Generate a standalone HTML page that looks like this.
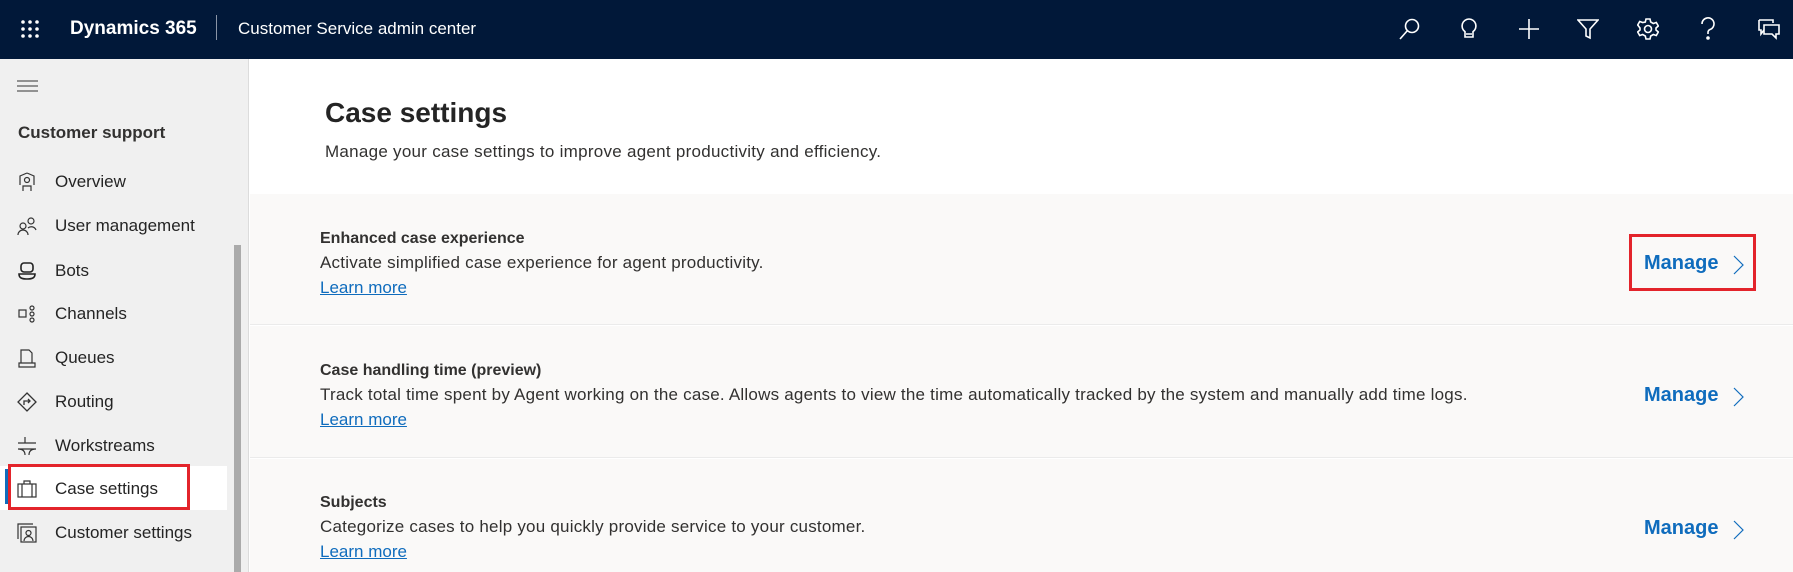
<!DOCTYPE html>
<html><head><meta charset="utf-8"><style>
*{margin:0;padding:0;box-sizing:border-box}
body{width:1793px;height:572px;overflow:hidden;font-family:"Segoe UI","Liberation Sans",sans-serif;background:#fff;position:relative;color:#242424}
.top{position:absolute;left:0;top:0;width:1793px;height:59px;background:#011839;color:#fff}
.abs{position:absolute}
.side{position:absolute;left:0;top:59px;width:249px;height:513px;background:#f0f0f0;border-right:1px solid #dcdcdc}
.nav{position:absolute;left:55px;font-size:17px;color:#242424;line-height:20px}
.ic{position:absolute;left:17px}
.card{position:absolute;left:250px;width:1543px;background:#faf9f8;border-bottom:1px solid #ebebeb}
.t{position:absolute;left:70px;font-size:16px;font-weight:bold;color:#323130}
.d{position:absolute;left:70px;font-size:17px;letter-spacing:0.22px;color:#323130}
.l{position:absolute;left:70px;font-size:17px;color:#0f6cbd;text-decoration:underline}
.m{position:absolute;left:1394px;font-size:20px;font-weight:bold;color:#0f6cbd}
.ch{position:absolute;left:1483px}
</style></head><body>
<div class="top">
 <svg class="abs" style="left:20px;top:19px" width="20" height="20" fill="#fff"><circle cx="3" cy="3" r="1.8"/><circle cx="10" cy="3" r="1.8"/><circle cx="17" cy="3" r="1.8"/><circle cx="3" cy="10" r="1.8"/><circle cx="10" cy="10" r="1.8"/><circle cx="17" cy="10" r="1.8"/><circle cx="3" cy="17" r="1.8"/><circle cx="10" cy="17" r="1.8"/><circle cx="17" cy="17" r="1.8"/></svg>
 <div class="abs" style="left:70px;top:18px;font-size:19px;font-weight:bold">Dynamics 365</div>
 <div class="abs" style="left:216px;top:15px;width:1px;height:25px;background:#8a94a6"></div>
 <div class="abs" style="left:238px;top:19px;font-size:17px">Customer Service admin center</div>
 <svg class="abs" style="left:1398px;top:17px" width="24" height="24" fill="none" stroke="#fff" stroke-width="1.6"><circle cx="14" cy="9" r="6.5"/><path d="M9.5 13.5L2 22"/></svg>
 <svg class="abs" style="left:1458px;top:17px" width="22" height="24" fill="none" stroke="#fff" stroke-width="1.6"><path d="M11 2a7 7 0 0 0-4 12.7V20h8v-5.3A7 7 0 0 0 11 2zM8 17h6"/></svg>
 <svg class="abs" style="left:1518px;top:18px" width="22" height="22" stroke="#fff" stroke-width="1.6"><path d="M11 1v20M1 11h20"/></svg>
 <svg class="abs" style="left:1577px;top:18px" width="22" height="22" fill="none" stroke="#fff" stroke-width="1.6"><path d="M1 2h20l-8 9v9l-4-2v-7z"/></svg>
 <svg class="abs" style="left:1637px;top:18px" width="22" height="22" fill="none" stroke="#fff" stroke-width="1.6"><circle cx="11" cy="11" r="3.5"/><path d="M9 1h4l.7 3 2.6 1.5 3-1 2 3.5-2.3 2v2l2.3 2-2 3.5-3-1L13.7 18 13 21H9l-.7-3-2.6-1.5-3 1-2-3.5 2.3-2v-2L.7 7l2-3.5 3 1L8.3 4z"/></svg>
 <svg class="abs" style="left:1699px;top:17px" width="18" height="24" fill="none" stroke="#fff" stroke-width="1.6"><path d="M3 7a6 6 0 1 1 8 5.5c-1.5.7-2 1.6-2 3V17"/><circle cx="9" cy="21" r="1" fill="#fff"/></svg>
 <svg class="abs" style="left:1757px;top:18px" width="24" height="22" fill="none" stroke="#fff" stroke-width="1.6"><path d="M2 2h14v3M2 2v10h2v4l3-4"/><path d="M7 7h15v9h-3v4l-4-4H7z"/></svg>
</div>
<div class="side">
 <svg class="abs" style="left:17px;top:21px" width="21" height="12" stroke="#333" stroke-width="1"><path d="M0 1h21M0 6h21M0 11h21"/></svg>
 <div class="abs" style="left:18px;top:64px;font-size:17px;font-weight:bold;color:#323130">Customer support</div>
 <div class="abs" style="left:234px;top:186px;width:7px;height:327px;background:#ababab"></div>
 <div class="abs" style="left:0;top:407px;width:227px;height:44px;background:#fff"></div>
 <div class="abs" style="left:5px;top:410px;width:3px;height:35px;background:#0f6cbd"></div>
 <div class="abs" style="left:8px;top:405px;width:182px;height:46px;border:3px solid #e3242b"></div>
</div>
<svg class="ic" style="top:172px" width="20" height="20" fill="none" stroke="#333" stroke-width="1.2"><path d="M10 1l7 3v9M10 1L3 4v9"/><circle cx="10" cy="8" r="2.5"/><path d="M6 19v-5h8v5"/></svg><div class="nav" style="top:172px">Overview</div>
<svg class="ic" style="top:216px" width="20" height="20" fill="none" stroke="#333" stroke-width="1.2"><circle cx="6" cy="10" r="3"/><circle cx="14" cy="5" r="3"/><path d="M1 19a5 5 0 0 1 10 0M11 12a5 5 0 0 1 8 2"/></svg><div class="nav" style="top:216px">User management</div>
<svg class="ic" style="top:261px" width="20" height="20" fill="none" stroke="#222" stroke-width="1.6"><rect x="4" y="2" width="12" height="9" rx="3"/><path d="M2 13h16c0 4-3 5-8 5s-8-1-8-5z"/></svg><div class="nav" style="top:261px">Bots</div>
<svg class="ic" style="top:304px" width="20" height="20" fill="none" stroke="#333" stroke-width="1.2"><rect x="2" y="6" width="7" height="7"/><circle cx="15" cy="4" r="2"/><circle cx="15" cy="10" r="2"/><circle cx="15" cy="16" r="2"/></svg><div class="nav" style="top:304px">Channels</div>
<svg class="ic" style="top:348px" width="20" height="20" fill="none" stroke="#333" stroke-width="1.2"><path d="M4 15V2h8l3 3v10M2 15h16v4H2z"/></svg><div class="nav" style="top:348px">Queues</div>
<svg class="ic" style="top:392px" width="20" height="20" fill="none" stroke="#333" stroke-width="1.3"><path d="M10 1l9 9-9 9-9-9z"/><path d="M7 13v-4h6M11 7l2 2-2 2"/></svg><div class="nav" style="top:392px">Routing</div>
<svg class="ic" style="top:436px" width="20" height="20" fill="none" stroke="#333" stroke-width="1.2"><path d="M1 7h18M1 13h18M8 1v6M12 19c0-4 2-6 7-6M8 19c0-4-2-6-7-6"/></svg><div class="nav" style="top:436px">Workstreams</div>
<svg class="ic" style="top:479px" width="20" height="20" fill="none" stroke="#333" stroke-width="1.2"><rect x="1" y="5" width="18" height="13"/><path d="M7 5V2h6v3M5 5v13M15 5v13"/></svg><div class="nav" style="top:479px">Case settings</div>
<svg class="ic" style="top:523px" width="20" height="20" fill="none" stroke="#333" stroke-width="1.2"><rect x="4" y="4" width="15" height="15"/><path d="M1 16V1h15"/><circle cx="11.5" cy="10" r="2.5"/><path d="M7 18a4.5 4.5 0 0 1 9 0"/></svg><div class="nav" style="top:523px">Customer settings</div>

<div class="abs" style="left:325px;top:97px;font-size:28px;font-weight:600;color:#242424">Case settings</div>
<div class="abs" style="left:325px;top:142px;font-size:17px;letter-spacing:0.27px;color:#323130">Manage your case settings to improve agent productivity and efficiency.</div>

<div class="card" style="top:194px;height:131px">
 <div class="t" style="top:36px">Enhanced case experience</div>
 <div class="d" style="top:59px">Activate simplified case experience for agent productivity.</div>
 <div class="l" style="top:84px">Learn more</div>
 <div class="m" style="top:58px">Manage</div>
 <svg class="ch" style="top:61px" width="11" height="20" fill="none" stroke="#0f6cbd" stroke-width="1.2"><path d="M1 1l9 9-9 9"/></svg>
 <div class="abs" style="left:1379px;top:40px;width:127px;height:57px;border:3px solid #e3242b"></div>
</div>
<div class="card" style="top:326px;height:132px">
 <div class="t" style="top:36px">Case handling time (preview)</div>
 <div class="d" style="top:59px">Track total time spent by Agent working on the case. Allows agents to view the time automatically tracked by the system and manually add time logs.</div>
 <div class="l" style="top:84px">Learn more</div>
 <div class="m" style="top:58px">Manage</div>
 <svg class="ch" style="top:61px" width="11" height="20" fill="none" stroke="#0f6cbd" stroke-width="1.2"><path d="M1 1l9 9-9 9"/></svg>
</div>
<div class="card" style="top:459px;height:113px;border:none">
 <div class="t" style="top:35px">Subjects</div>
 <div class="d" style="top:58px">Categorize cases to help you quickly provide service to your customer.</div>
 <div class="l" style="top:83px">Learn more</div>
 <div class="m" style="top:58px">Manage</div>
 <svg class="ch" style="top:61px" width="11" height="20" fill="none" stroke="#0f6cbd" stroke-width="1.2"><path d="M1 1l9 9-9 9"/></svg>
</div>
</body></html>
